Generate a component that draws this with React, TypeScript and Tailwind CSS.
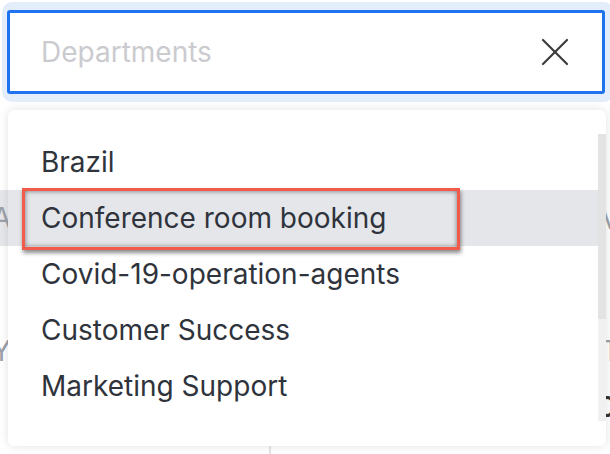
import { X } from "lucide-react";

const items = [
  "Brazil",
  "Conference room booking",
  "Covid-19-operation-agents",
  "Customer Success",
  "Marketing Support",
];

// faint page underneath the open menu, only its edges show
function BackPage() {
  return (
    <div className="absolute inset-0 text-[28px] text-[#9ca0a8]">
      <div className="absolute left-0 top-[190px] flex h-[56px] w-[12px] items-center bg-[#e6e7ea]">
        <span className="-ml-[8px]">A</span>
      </div>
      <span className="absolute left-[-8px] top-[330px]">Y</span>
      <span className="absolute left-[601px] top-[198px]">V</span>
      <span className="absolute left-[602px] top-[330px]">T</span>
      <span className="absolute left-[598px] top-[386px] font-semibold text-[#333]">0</span>
      <div className="absolute left-[269px] top-[440px] h-[20px] w-[2px] bg-[#e5e5e5]" />
    </div>
  );
}

export default function App() {
  return (
    <div
      className="relative h-[454px] w-[610px] overflow-hidden bg-white"
      style={{ fontFamily: "Inter, 'Noto Sans', sans-serif" }}
    >
      <BackPage />

      <div className="relative flex flex-col pl-[2px] pt-[2px]">
        {/* search field with focus ring */}
        <div className="w-[612px] rounded-[10px] bg-[#e4eefb] px-[5px] pb-[8px] pt-[8px]">
          <div className="flex h-[84px] w-[598px] items-center justify-between rounded-[3px] border-[3px] border-[#1f72f0] bg-white pl-[31px] pr-[23px]">
            <span className="text-[28px] text-[#cbcbcf]">Departments</span>
            <X className="h-[48px] w-[48px] text-[#3a3a3a]" strokeWidth={1.1} />
          </div>
        </div>

        {/* dropdown */}
        <div className="relative ml-[6px] mt-[8px] h-[336px] w-[598px] rounded-[6px] bg-white pb-[31px] pt-[24px] shadow-[0_0_10px_rgba(0,0,0,0.12)]">
          <div className="flex">
            <ul className="flex-1">
              {items.map((item, i) => (
                <li
                  key={item}
                  className={`flex h-[56px] items-center pl-[33px] text-[28px] text-[#2f333c] ${
                    i === 1 ? "bg-[#e5e6ea]" : ""
                  }`}
                >
                  {item}
                </li>
              ))}
            </ul>
            <div className="flex h-[287px] w-[8px] flex-col bg-[#f1f1f1]">
              <div className="h-[185px] bg-[#e3e3e3]" />
            </div>
          </div>

          {/* annotation box */}
          <div className="absolute left-[14px] top-[78px] h-[62px] w-[438px] border-[3px] border-[#f25a4b] shadow-[1px_3px_4px_rgba(0,0,0,0.45),inset_0_0_5px_rgba(0,0,0,0.5)]" />
        </div>
      </div>
    </div>
  );
}
